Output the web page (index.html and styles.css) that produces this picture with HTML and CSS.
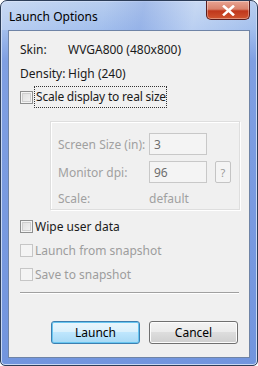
FILE: index.html
```html
<!DOCTYPE html>
<html lang="en">
<head>
    <meta charset="UTF-8">
    <title>Launch Options</title>
    <link rel="stylesheet" href="styles.css">
</head>
<body>
    <div class="window">
        <div class="titlebar">
            <span class="title">Launch Options</span>
            <div class="close-btn">
                <svg width="13" height="11" viewBox="0 0 13 11">
                    <path d="M2 1.5 L11 9.5 M11 1.5 L2 9.5" stroke="#fff" stroke-width="2.6" stroke-linecap="square"/>
                </svg>
            </div>
        </div>

        <div class="client">
            <div class="row">
                <span class="key">Skin:</span>
                <span>WVGA800 (480x800)</span>
            </div>
            <div class="row">
                <span class="key">Density:</span>
                <span>High (240)</span>
            </div>
            <div class="row">
                <span class="check"></span>
                <span class="focus">Scale display to real size</span>
            </div>

            <div class="group">
                <div class="group-row">
                    <span class="glabel">Screen Size (in):</span>
                    <span class="input">3</span>
                </div>
                <div class="group-row">
                    <span class="glabel">Monitor dpi:</span>
                    <span class="input">96</span>
                    <span class="help-btn">?</span>
                </div>
                <div class="group-row scale-row">
                    <span class="glabel">Scale:</span>
                    <span>default</span>
                </div>
            </div>

            <div class="row">
                <span class="check"></span>
                <span>Wipe user data</span>
            </div>
            <div class="row disabled">
                <span class="check"></span>
                <span>Launch from snapshot</span>
            </div>
            <div class="row disabled">
                <span class="check"></span>
                <span>Save to snapshot</span>
            </div>

            <div class="separator"></div>

            <div class="buttons">
                <span class="btn default">Launch</span>
                <span class="btn">Cancel</span>
            </div>
        </div>
    </div>
</body>
</html>
```

FILE: styles.css
```css
* {
    margin: 0;
    padding: 0;
    box-sizing: border-box;
}

body {
    font-family: "Noto Sans", "Open Sans", sans-serif;
    font-size: 12px;
    background: #fff;
    width: 258px;
    height: 366px;
}

.window {
    width: 258px;
    height: 366px;
    border: 1px solid #2c3d58;
    border-radius: 7px 7px 5px 5px;
    background: linear-gradient(#b7cdef 0px, #a3bfed 28px, #7f9fe2 60px, #7295de 100%);
    display: flex;
    flex-direction: column;
    overflow: hidden;
    box-shadow: inset 0 0 0 1px #c9d9f4;
}

.titlebar {
    height: 29px;
    display: flex;
    justify-content: space-between;
    align-items: flex-start;
    padding: 0 7px;
    background: linear-gradient(100deg, rgba(255,255,255,0.25) 0%, rgba(255,255,255,0) 40%, rgba(120,150,220,0.3) 55%, rgba(255,255,255,0.25) 75%, rgba(255,255,255,0) 100%);
}

.title {
    color: #000;
    font-size: 12px;
    padding-top: 7px;
    padding-left: 1px;
}

.close-btn {
    width: 44px;
    height: 19px;
    border: 1px solid #5a1d1d;
    border-top: none;
    border-radius: 0 0 5px 5px;
    background: linear-gradient(#e8a493 0%, #d9826c 45%, #c0371c 55%, #d0542f 100%);
    display: flex;
    align-items: center;
    justify-content: center;
    box-shadow: inset 0 0 0 1px rgba(255, 255, 255, 0.35);
}

.client {
    flex: 1;
    margin: 0 7px 7px 7px;
    border: 1px solid #6f84a6;
    background: #f0f0f0;
    padding: 6px 10px 0 11px;
    color: #1a1a1a;
}

.row {
    height: 24px;
    display: flex;
    align-items: center;
}

.key {
    width: 48px;
}

.check {
    width: 13px;
    height: 13px;
    border: 1px solid #8e8f8f;
    background: linear-gradient(135deg, #dcdcdc, #f6f6f6);
    box-shadow: inset 0 0 0 1px #f4f4f4, inset 0 0 0 2px #cfcfcf;
    margin-right: 2px;
}

.focus {
    outline: 1px dotted #333;
    padding: 1px 0 2px 1px;
    letter-spacing: -0.2px;
}

.group {
    margin: 12px 0 4px 30px;
    width: 190px;
    height: 89px;
    border: 1px solid #dedede;
    box-shadow: inset 1px 1px 0 #fff, 1px 1px 0 #fff;
    padding: 11px 0 0 7px;
    color: #a0a0a0;
    display: flex;
    flex-direction: column;
    gap: 6px;
}

.group-row {
    height: 22px;
    display: flex;
    align-items: center;
}

.scale-row {
    margin-top: -2px;
}

.glabel {
    width: 91px;
}

.input {
    width: 58px;
    height: 22px;
    border: 1px solid #c8c8c8;
    background: #f4f4f4;
    color: #6d6d6d;
    padding-left: 4px;
    display: flex;
    align-items: center;
}

.help-btn {
    width: 16px;
    height: 22px;
    margin-left: 8px;
    border: 1px solid #c4c4c4;
    border-radius: 2px;
    background: #f4f4f4;
    color: #9a9a9a;
    display: flex;
    align-items: center;
    justify-content: center;
    font-size: 11px;
}

.disabled {
    color: #9d9d9d;
}

.disabled .check {
    border-color: #c6c6c6;
    background: #f4f4f4;
    box-shadow: none;
}

.separator {
    margin-top: 6px;
    height: 2px;
    border-top: 1px solid #a0a0a0;
    border-bottom: 1px solid #fff;
}

.buttons {
    margin-top: 27px;
    display: flex;
    justify-content: flex-end;
    gap: 9px;
    padding-right: 1px;
}

.btn {
    width: 89px;
    height: 23px;
    border: 1px solid #707070;
    border-radius: 3px;
    background: linear-gradient(#f3f3f3 0%, #ebebeb 49%, #dddddd 50%, #cfcfcf 100%);
    box-shadow: inset 0 0 0 1px #fcfcfc;
    display: flex;
    align-items: center;
    justify-content: center;
    color: #000;
}

.btn.default {
    border-color: #3c7fb1;
    background: linear-gradient(#eaf6fd 0%, #d9f0fc 49%, #bee6fd 50%, #a7d9f5 100%);
    box-shadow: inset 0 0 0 1px #68c6f0;
}
```
